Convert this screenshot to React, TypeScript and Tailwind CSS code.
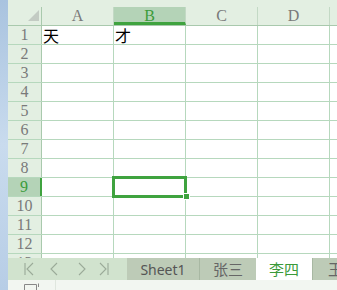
import React from "react";

const cols = ["A", "B", "C", "D", "E"];
const rows = Array.from({ length: 13 }, (_, i) => i + 1);
const hdr = { fontFamily: '"Liberation Serif", "DejaVu Serif", serif' };
const cjk = { fontFamily: '"Noto Sans CJK SC", "Noto Sans", sans-serif' };
const sans = { fontFamily: '"Noto Sans", "Noto Sans CJK SC", sans-serif' };

function Nav({ d }: { d: string }) {
  return (
    <svg width="12" height="14" viewBox="0 0 12 14" fill="none" stroke="#9aaa98" strokeWidth="1.1">
      <path d={d} />
    </svg>
  );
}

export default function App() {
  return (
    <div className="w-[337px] h-[290px] flex overflow-hidden bg-white">
      <div className="w-[8px] h-full bg-gradient-to-b from-[#a9c3df] via-[#c9dbee] to-[#b7cde6]" />
      <div className="flex-1 flex flex-col relative overflow-hidden">
        <div className="h-[7px] bg-[#e3efe2] shrink-0" />
        {/* header */}
        <div className="h-[19px] flex shrink-0 bg-[#e3efe2] border-b border-[#a9c9ad]">
          <div className="w-[34px] shrink-0 border-r border-[#a9c9ad] relative">
            <svg className="absolute left-[20px] top-[3px]" width="11" height="11" viewBox="0 0 11 11">
              <path d="M11 0 L11 11 L0 11 Z" fill="#c3cbc3" />
            </svg>
          </div>
          {cols.map((c) => (
            <div
              key={c}
              className={
                "w-[72px] shrink-0 border-r border-[#c3d9c5] flex items-center justify-center text-[16px] leading-[18px] " +
                (c === "B" ? "bg-[#b4d3b7] text-[#3c9c3c] border-b-[3px] border-b-[#3fa33f] pt-[3px]" : "text-[#7a7a7a]")
              }
              style={hdr}
            >
              {c === "E" ? "" : c}
            </div>
          ))}
        </div>
        {/* grid */}
        <div className="flex-1 overflow-hidden flex flex-col">
          {rows.map((r) => (
            <div key={r} className="h-[19px] shrink-0 flex border-b border-[#b6d8bd]">
              <div
                className={
                  "w-[34px] shrink-0 flex items-center justify-center text-[16px] leading-[18px] " +
                  (r === 9
                    ? "bg-[#b4d3b7] text-[#3c9c3c] border-r-[2px] border-[#3fa33f]"
                    : "bg-[#e3efe2] text-[#7a7a7a] border-r border-[#a9c9ad]")
                }
                style={hdr}
              >
                {r}
              </div>
              {cols.map((c) => (
                <div
                  key={c}
                  className="w-[72px] shrink-0 border-r border-[#b6d8bd] flex items-end pl-[1px] text-[16px] leading-[18px] text-black"
                  style={cjk}
                >
                  {r === 1 && c === "A" ? "天" : r === 1 && c === "B" ? "才" : ""}
                </div>
              ))}
            </div>
          ))}
        </div>
        {/* tab bar */}
        <div className="h-[22px] shrink-0 flex bg-[#d1e3ce]">
          <div className="w-[119px] shrink-0 flex items-center">
            <div className="ml-[15px] flex items-center">
              <Nav d="M2 1 V13 M10 1 L4 7 L10 13" />
            </div>
            <div className="ml-[14px] flex items-center">
              <Nav d="M8 1 L2 7 L8 13" />
            </div>
            <div className="ml-[14px] flex items-center">
              <Nav d="M4 1 L10 7 L4 13" />
            </div>
            <div className="ml-[11px] flex items-center">
              <Nav d="M2 1 L8 7 L2 13 M10 1 V13" />
            </div>
          </div>
          <div className="w-[73px] shrink-0 bg-[#bdcbb7] border-r border-[#a8b8a3] flex items-center justify-center text-[14px] text-[#555]" style={sans}>
            Sheet1
          </div>
          <div className="w-[56px] shrink-0 bg-[#bdcbb7] flex items-center justify-center text-[15px] text-[#666]" style={cjk}>
            张三
          </div>
          <div className="w-[56px] shrink-0 bg-white flex items-center justify-center text-[15px] text-[#3a9a3a]" style={cjk}>
            李四
          </div>
          <div className="flex-1 bg-[#bdcbb7] border-l border-[#a8b8a3] flex items-center pl-[15px] text-[15px] text-[#666] overflow-hidden" style={cjk}>
            王
          </div>
        </div>
        {/* status */}
        <div className="h-[10px] shrink-0 bg-[#f2f6f1] flex">
          <div className="w-[48px] shrink-0 border-r border-[#dfe6de] relative">
            <svg className="absolute left-[16px] top-[3px]" width="17" height="8" viewBox="0 0 17 8" fill="none" stroke="#888">
              <path d="M0.5 8 V1.5 H12.5 V8" />
              <path d="M14.5 0.5 V4" />
            </svg>
          </div>
        </div>
        {/* selection overlay */}
        <div className="absolute left-[104px] top-[176px] w-[75px] h-[22px] border-[3px] border-[#3fa33f]" />
        <div className="absolute left-[175px] top-[193px] w-[7px] h-[7px] bg-[#3fa33f] border border-white" />
      </div>
    </div>
  );
}
